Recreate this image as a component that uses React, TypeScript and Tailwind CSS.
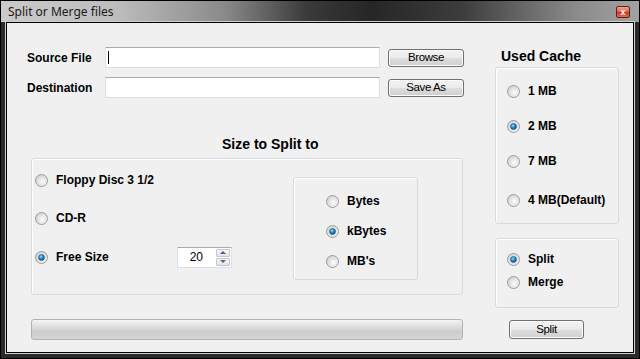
import React from "react";

const LABEL = "font-['Liberation_Sans',Arial,sans-serif] font-bold text-[12px] text-black leading-none";

function Radio({ checked = false }: { checked?: boolean }) {
  return (
    <svg width="13" height="13" viewBox="0 0 13 13" className="shrink-0">
      <defs>
        <linearGradient id="rbOuter" x1="0" y1="0" x2="1" y2="1">
          <stop offset="0" stopColor="#cfcfcf" />
          <stop offset="1" stopColor="#f7f7f7" />
        </linearGradient>
        <radialGradient id="rbInner" cx="0.6" cy="0.6" r="0.7">
          <stop offset="0" stopColor="#ffffff" />
          <stop offset="1" stopColor="#d4d4d4" />
        </radialGradient>
        <radialGradient id="rbDot" cx="0.4" cy="0.35" r="0.7">
          <stop offset="0" stopColor="#9fdcfb" />
          <stop offset="0.45" stopColor="#2a8fd0" />
          <stop offset="1" stopColor="#0d4a7c" />
        </radialGradient>
      </defs>
      <circle cx="6.5" cy="6.5" r="6" fill="url(#rbOuter)" stroke="#9a9a9a" strokeWidth="1" />
      <circle cx="6.5" cy="6.5" r="4.4" fill="url(#rbInner)" />
      {checked && <circle cx="6.5" cy="6.5" r="3" fill="url(#rbDot)" stroke="#1d4f78" strokeWidth="0.6" />}
    </svg>
  );
}

function Option({ label, checked, className = "" }: { label: string; checked?: boolean; className?: string }) {
  return (
    <div className={`flex items-center h-[20px] ${className}`}>
      <Radio checked={checked} />
      <span className={`${LABEL} ml-[8px]`}>{label}</span>
    </div>
  );
}

function WinButton({ label, className = "" }: { label: string; className?: string }) {
  return (
    <div
      className={`flex items-center justify-center rounded-[3px] border border-[#707070] bg-[linear-gradient(to_bottom,#f2f2f2_0%,#ebebeb_48%,#dddddd_52%,#cfcfcf_100%)] shadow-[inset_0_0_0_1px_#fbfbfb] font-['Liberation_Sans',Arial,sans-serif] text-[11.5px] tracking-[-0.4px] text-black ${className}`}
    >
      {label}
    </div>
  );
}

function TextBox({ cursor = false }: { cursor?: boolean }) {
  return (
    <div className="w-[275px] h-[21px] bg-white border border-[#dbdfe6] border-t-[#abadb3] flex items-center pl-[2px]">
      {cursor && <div className="w-px h-[13px] bg-black" />}
    </div>
  );
}

function Group({ className = "", children }: { className?: string; children?: React.ReactNode }) {
  return (
    <div className={`rounded-[3px] border border-[#d5dbe0] shadow-[inset_1px_1px_0_#ffffff] ${className}`}>
      {children}
    </div>
  );
}

export default function App() {
  return (
    <div className="w-[640px] h-[359px] border border-black bg-[#2a2a2a] flex flex-col overflow-hidden">
      {/* Title bar */}
      <div className="h-[21px] shrink-0 flex items-center justify-between pl-[7px] pr-[9px] bg-[linear-gradient(to_right,#cacaca_0%,#bdbdbd_18%,#8a8a8a_35%,#3a3a3a_48%,#262626_58%,#3c3c3c_72%,#8a8a8a_90%,#a2a2a2_100%)]">
        <span className="font-['Noto_Sans',sans-serif] text-[12px] text-[#1a1a1a] leading-none pt-[1px]">Split or Merge files</span>
        <div className="w-[14px] h-[12px] mt-[1px] rounded-[2px] border border-[#5a2218] bg-[linear-gradient(to_bottom,#f0a592_0%,#dc6249_50%,#c63d26_55%,#dc6b50_100%)] flex items-center justify-center">
          <span className="font-['Liberation_Sans',Arial,sans-serif] font-bold text-[9px] leading-none text-white">x</span>
        </div>
      </div>

      {/* Frame */}
      <div className="flex-1 px-[5px] pb-[5px] flex">
        <div className="flex-1 border border-black outline outline-1 outline-[#cfcfcf] bg-[#f0f0f0] flex">
          {/* Left column */}
          <div className="w-[468px] pl-[20px] pt-[24px] flex flex-col">
            <div className="flex items-center">
              <span className={`${LABEL} w-[78px]`}>Source File</span>
              <TextBox cursor />
              <WinButton label="Browse" className="ml-[8px] w-[76px] h-[18px]" />
            </div>
            <div className="flex items-center mt-[9px]">
              <span className={`${LABEL} w-[78px]`}>Destination</span>
              <TextBox />
              <WinButton label="Save As" className="ml-[8px] w-[76px] h-[18px]" />
            </div>

            <div className="mt-[38px] pl-[195px] h-[16px] flex items-center">
              <span className="font-['Liberation_Sans',Arial,sans-serif] font-bold text-[14px] leading-none text-black">Size to Split to</span>
            </div>

            <Group className="ml-[4px] mt-[6px] w-[432px] h-[137px] flex pl-[3px]">
              <div className="w-[258px] flex flex-col pt-[11px]">
                <Option label="Floppy Disc 3 1/2" />
                <Option label="CD-R" className="mt-[18px]" />
                <div className="flex items-center h-[20px] mt-[19px]">
                  <Radio checked />
                  <span className={`${LABEL} ml-[8px] w-[121px]`}>Free Size</span>
                  <div className="w-[55px] h-[21px] bg-white border border-[#dbdfe6] border-t-[#abadb3] flex items-center">
                    <span className="w-[25px] text-right font-['Liberation_Sans',Arial,sans-serif] text-[12px] text-black leading-none">20</span>
                    <div className="ml-auto mr-[1px] w-[14px] h-[17px] flex flex-col gap-px">
                      <div className="flex-1 rounded-[1px] border border-[#c3c7cd] bg-[linear-gradient(to_bottom,#f7f7f7,#e2e4e8)] flex items-center justify-center">
                        <div className="w-0 h-0 border-l-[3px] border-r-[3px] border-b-[3px] border-l-transparent border-r-transparent border-b-[#4d6185]" />
                      </div>
                      <div className="flex-1 rounded-[1px] border border-[#c3c7cd] bg-[linear-gradient(to_bottom,#f7f7f7,#e2e4e8)] flex items-center justify-center">
                        <div className="w-0 h-0 border-l-[3px] border-r-[3px] border-t-[3px] border-l-transparent border-r-transparent border-t-[#4d6185]" />
                      </div>
                    </div>
                  </div>
                </div>
              </div>
              <Group className="mt-[18px] w-[125px] h-[103px] pl-[32px] pt-[13px] flex flex-col">
                <Option label="Bytes" />
                <Option label="kBytes" checked className="mt-[10px]" />
                <Option label="MB's" className="mt-[10px]" />
              </Group>
            </Group>

            <div className="ml-[4px] mt-[24px] w-[432px] h-[21px] rounded-[3px] border border-[#b2b2b2] bg-[linear-gradient(to_bottom,#f4f4f4_0%,#dedede_35%,#cdcdcd_60%,#d6d6d6_100%)]" />
          </div>

          {/* Right column */}
          <div className="ml-[20px] w-[124px] pt-[25px] flex flex-col">
            <div className="pl-[6px] h-[16px] flex items-center">
              <span className="font-['Liberation_Sans',Arial,sans-serif] font-bold text-[14px] leading-none text-black">Used Cache</span>
            </div>
            <Group className="mt-[3px] h-[157px] pl-[11px] pt-[13px] flex flex-col">
              <Option label="1 MB" />
              <Option label="2 MB" checked className="mt-[15px]" />
              <Option label="7 MB" className="mt-[15px]" />
              <Option label="4 MB(Default)" className="mt-[19px]" />
            </Group>
            <Group className="mt-[14px] h-[70px] pl-[11px] pt-[10px] flex flex-col">
              <Option label="Split" checked />
              <Option label="Merge" className="mt-[3px]" />
            </Group>
            <WinButton label="Split" className="ml-[14px] mt-[12px] w-[75px] h-[19px]" />
          </div>
        </div>
      </div>
    </div>
  );
}
